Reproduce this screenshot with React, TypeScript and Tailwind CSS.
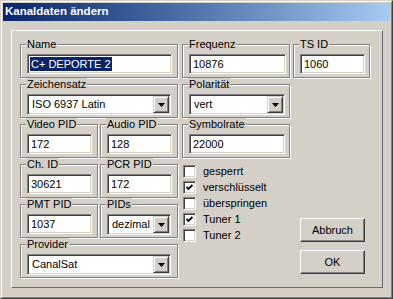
import React from 'react';

const sunken =
  'border border-t-[#808080] border-l-[#808080] border-b-white border-r-white shadow-[inset_1px_1px_0_#404040,inset_-1px_-1px_0_#d4d0c8]';
const raised =
  'border border-t-[#d4d0c8] border-l-[#d4d0c8] border-b-[#404040] border-r-[#404040] shadow-[inset_1px_1px_0_#fff,inset_-1px_-1px_0_#808080]';

function Group({ label, className, children }: { label: string; className: string; children?: React.ReactNode }) {
  return (
    <fieldset
      className={`h-[40px] shrink-0 border border-[#808080] shadow-[inset_1px_1px_0_#fff,1px_1px_0_#fff] pl-[6px] pt-[3px] ${className}`}
    >
      <legend className="-ml-[1px] px-[1px] leading-[13px] bg-[#d4d0c8]">{label}</legend>
      {children}
    </fieldset>
  );
}

function Field({ value, className, selected }: { value: string; className: string; selected?: boolean }) {
  return (
    <div className={`${sunken} bg-white h-[20px] flex items-center ${selected ? 'pl-[2px]' : 'pl-[3px]'} ${className}`}>
      {selected ? (
        <span className="bg-[#0a246a] text-white px-[1px] leading-[14px]">{value}</span>
      ) : (
        <span>{value}</span>
      )}
    </div>
  );
}

function Combo({ value, className }: { value: string; className: string }) {
  return (
    <div className={`${sunken} bg-white h-[21px] p-[1px] flex ${className}`}>
      <div className="flex-1 flex items-center pl-[3px] overflow-hidden whitespace-nowrap">{value}</div>
      <div className={`${raised} bg-[#d4d0c8] w-[16px] shrink-0 h-full flex items-center justify-center`}>
        <svg width="7" height="4" viewBox="0 0 7 4">
          <polygon points="0,0 7,0 3.5,4" fill="#000" />
        </svg>
      </div>
    </div>
  );
}

function Check({ label, checked }: { label: string; checked?: boolean }) {
  return (
    <div className="h-[16px] flex items-start gap-[7px]">
      <div className={`${sunken} bg-white w-[13px] h-[13px] flex items-center justify-center`}>
        {checked && (
          <svg width="7" height="7" viewBox="0 0 7 7">
            <polyline points="0.5,3 2.5,5 6.5,1" fill="none" stroke="#000" strokeWidth="1.8" />
          </svg>
        )}
      </div>
      <span className="leading-[13px]">{label}</span>
    </div>
  );
}

function Button({ label, className }: { label: string; className: string }) {
  return (
    <div
      className={`border border-t-white border-l-white border-b-[#404040] border-r-[#404040] shadow-[inset_-1px_-1px_0_#808080] w-[65px] flex items-center justify-center ${className}`}
    >
      {label}
    </div>
  );
}

export default function App() {
  return (
    <div className="w-[393px] h-[299px] bg-[#d4d0c8] text-black text-[11px] font-['Liberation_Sans',Arial,sans-serif] border border-t-[#d4d0c8] border-l-[#d4d0c8] border-b-[#404040] border-r-[#404040]">
      <div className="h-full border border-t-white border-l-white border-b-[#808080] border-r-[#808080] p-[1px] flex flex-col">
        <div className="h-[18px] shrink-0 bg-gradient-to-r from-[#0a246a] to-[#a6caf0] flex items-center pl-[2px] text-white font-bold text-[11.5px]">
          Kanaldaten ändern
        </div>
        <div className="ml-[8px] mt-[9px] w-[372px] h-[258px] border border-t-white border-l-white border-b-[#6a6a6a] border-r-[#6a6a6a] pl-[8px] pt-[7px] flex flex-col">
          <div className="flex">
            <Group label="Name" className="w-[158px]">
              <Field value="C+ DEPORTE 2" className="w-[145px]" selected />
            </Group>
            <Group label="Frequenz" className="w-[108px] ml-[4px]">
              <Field value="10876" className="w-[97px]" />
            </Group>
            <Group label="TS ID" className="w-[77px] ml-[3px]">
              <Field value="1060" className="w-[65px]" />
            </Group>
          </div>
          <div className="flex">
            <Group label="Zeichensatz" className="w-[158px]">
              <Combo value="ISO 6937 Latin" className="w-[144px]" />
            </Group>
            <Group label="Polarität" className="w-[108px] ml-[4px]">
              <Combo value="vert" className="w-[96px]" />
            </Group>
          </div>
          <div className="flex">
            <Group label="Video PID" className="w-[78px]">
              <Field value="172" className="w-[65px]" />
            </Group>
            <Group label="Audio PID" className="w-[78px] ml-[2px]">
              <Field value="128" className="w-[65px]" />
            </Group>
            <Group label="Symbolrate" className="w-[108px] ml-[4px]">
              <Field value="22000" className="w-[96px]" />
            </Group>
          </div>
          <div className="flex">
            <div className="flex flex-col w-[158px]">
              <div className="flex">
                <Group label="Ch. ID" className="w-[78px]">
                  <Field value="30621" className="w-[65px]" />
                </Group>
                <Group label="PCR PID" className="w-[78px] ml-[2px]">
                  <Field value="172" className="w-[65px]" />
                </Group>
              </div>
              <div className="flex">
                <Group label="PMT PID" className="w-[78px]">
                  <Field value="1037" className="w-[65px]" />
                </Group>
                <Group label="PIDs" className="w-[78px] ml-[2px]">
                  <Combo value="dezimal" className="w-[64px]" />
                </Group>
              </div>
              <Group label="Provider" className="w-[158px]">
                <Combo value="CanalSat" className="w-[144px]" />
              </Group>
            </div>
            <div className="ml-[5px] pt-[7px] w-[117px] flex flex-col">
              <Check label="gesperrt" />
              <Check label="verschlüsselt" checked />
              <Check label="überspringen" />
              <Check label="Tuner 1" checked />
              <Check label="Tuner 2" />
            </div>
            <div className="flex flex-col pt-[60px] gap-[8px]">
              <Button label="Abbruch" className="h-[24px]" />
              <Button label="OK" className="h-[24px]" />
            </div>
          </div>
        </div>
      </div>
    </div>
  );
}
